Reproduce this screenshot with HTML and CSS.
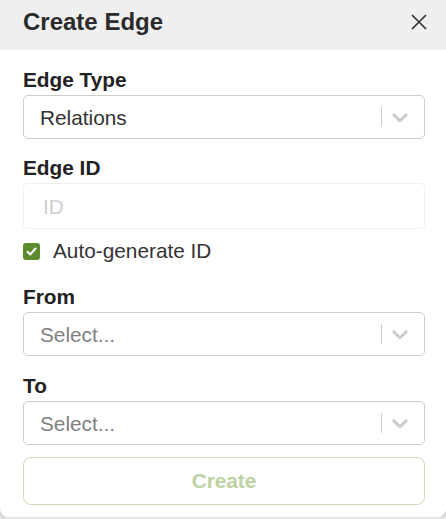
FILE: index.html
```html
<!DOCTYPE html>
<html lang="en">
<head>
<meta charset="utf-8">
<title>Create Edge</title>
<link rel="stylesheet" href="styles.css">
</head>
<body>
<div class="panel">
  <div class="header">
    <h1 class="title">Create Edge</h1>
    <button class="close" aria-label="Close">
      <svg width="16" height="16" viewBox="0 0 16 16"><path d="M1 1 L15 15 M15 1 L1 15" stroke="#333" stroke-width="1.7" fill="none"/></svg>
    </button>
  </div>
  <div class="form">
    <div class="field">
      <div class="label">Edge Type</div>
      <div class="select">
        <div class="value">Relations</div>
        <div class="indicators">
          <span class="sep"></span>
          <svg class="chev" width="26" height="26" viewBox="0 0 20 20"><path d="M4.516 7.548c0.436-0.446 1.043-0.481 1.576 0l3.908 3.747 3.908-3.747c0.533-0.481 1.141-0.446 1.574 0 0.436 0.445 0.408 1.197 0 1.615-0.406 0.418-4.695 4.502-4.695 4.502-0.217 0.223-0.502 0.335-0.787 0.335s-0.57-0.112-0.789-0.335c0 0-4.287-4.084-4.695-4.502s-0.436-1.17 0-1.615z" fill="#ccc"/></svg>
        </div>
      </div>
    </div>
    <div class="field field-id">
      <div class="label">Edge ID</div>
      <div class="input"><span class="ph">ID</span></div>
    </div>
    <div class="check-row">
      <span class="checkbox">
        <svg width="17" height="17" viewBox="0 0 17 17"><path d="M4.5 8.8 L7.2 11.5 L12.5 5.5" stroke="#fff" stroke-width="2" fill="none" stroke-linecap="round" stroke-linejoin="round"/></svg>
      </span>
      <span class="check-label">Auto-generate ID</span>
    </div>
    <div class="field field-from">
      <div class="label">From</div>
      <div class="select">
        <div class="value placeholder">Select...</div>
        <div class="indicators">
          <span class="sep"></span>
          <svg class="chev" width="26" height="26" viewBox="0 0 20 20"><path d="M4.516 7.548c0.436-0.446 1.043-0.481 1.576 0l3.908 3.747 3.908-3.747c0.533-0.481 1.141-0.446 1.574 0 0.436 0.445 0.408 1.197 0 1.615-0.406 0.418-4.695 4.502-4.695 4.502-0.217 0.223-0.502 0.335-0.787 0.335s-0.57-0.112-0.789-0.335c0 0-4.287-4.084-4.695-4.502s-0.436-1.17 0-1.615z" fill="#ccc"/></svg>
        </div>
      </div>
    </div>
    <div class="field field-to">
      <div class="label">To</div>
      <div class="select">
        <div class="value placeholder">Select...</div>
        <div class="indicators">
          <span class="sep"></span>
          <svg class="chev" width="26" height="26" viewBox="0 0 20 20"><path d="M4.516 7.548c0.436-0.446 1.043-0.481 1.576 0l3.908 3.747 3.908-3.747c0.533-0.481 1.141-0.446 1.574 0 0.436 0.445 0.408 1.197 0 1.615-0.406 0.418-4.695 4.502-4.695 4.502-0.217 0.223-0.502 0.335-0.787 0.335s-0.57-0.112-0.789-0.335c0 0-4.287-4.084-4.695-4.502s-0.436-1.17 0-1.615z" fill="#ccc"/></svg>
        </div>
      </div>
    </div>
    <button class="create">Create</button>
  </div>
</div>
</body>
</html>
```
FILE: styles.css
```css
* { box-sizing: border-box; }
html, body { margin: 0; padding: 0; }
body {
  background: #e6e6e6;
  font-family: "Liberation Sans", Arial, sans-serif;
  font-size: 20.8px;
  color: #333;
}
.panel {
  background: #fff;
  border-radius: 0 0 8px 8px;
  box-shadow: 0 1px 3px rgba(0,0,0,0.18);
  height: 517px;
}
.header {
  height: 50px;
  background: #efefef;
  display: flex;
  align-items: center;
  justify-content: space-between;
  padding: 0 19px 0 23px;
  padding-bottom: 6px;
}
.title {
  margin: 0;
  font-size: 24px;
  line-height: 28px;
  font-weight: bold;
  color: #2b2b2b;
}
.close {
  border: 0;
  background: none;
  padding: 0;
  width: 16px;
  height: 16px;
  display: flex;
}
.form {
  display: flex;
  flex-direction: column;
  padding: 18px 21px 12px 23px;
}
.label {
  font-weight: bold;
  line-height: 23px;
  color: #222;
  margin-bottom: 4px;
}
.select {
  height: 44px;
  border: 1px solid #ccc;
  border-radius: 5px;
  display: flex;
  align-items: center;
}
.value {
  flex: 1;
  padding-left: 16px;
  color: #333;
  line-height: 23px;
}
.value.placeholder { color: #808080; }
.indicators {
  display: flex;
  align-items: center;
  padding-right: 11px;
}
.sep {
  width: 1px;
  height: 20px;
  background: #ccc;
  margin-right: 5px;
}
.chev { display: block; }
.field-id { margin-top: 17px; }
.input {
  height: 46px;
  border: 1px solid #f0f0f0;
  border-radius: 4px;
  display: flex;
  align-items: center;
  padding-left: 19px;
}
.ph { color: #cfcfcf; line-height: 23px; }
.check-row {
  margin-top: 10px;
  display: flex;
  align-items: flex-start;
  line-height: 23px;
}
.checkbox {
  width: 17px;
  height: 17px;
  border-radius: 3px;
  background: #5d8a2c;
  margin-top: 4px;
  margin-right: 13px;
  display: flex;
}
.check-label { color: #333; }
.field-from { margin-top: 23px; }
.field-to { margin-top: 18px; }
.create {
  margin-top: 12px;
  height: 48px;
  border: 1px solid #c9dcb1;
  border-radius: 8px;
  background: #fff;
  font-family: "Liberation Sans", Arial, sans-serif;
  font-size: 20.8px;
  font-weight: bold;
  color: #bdd2a2;
}
```
